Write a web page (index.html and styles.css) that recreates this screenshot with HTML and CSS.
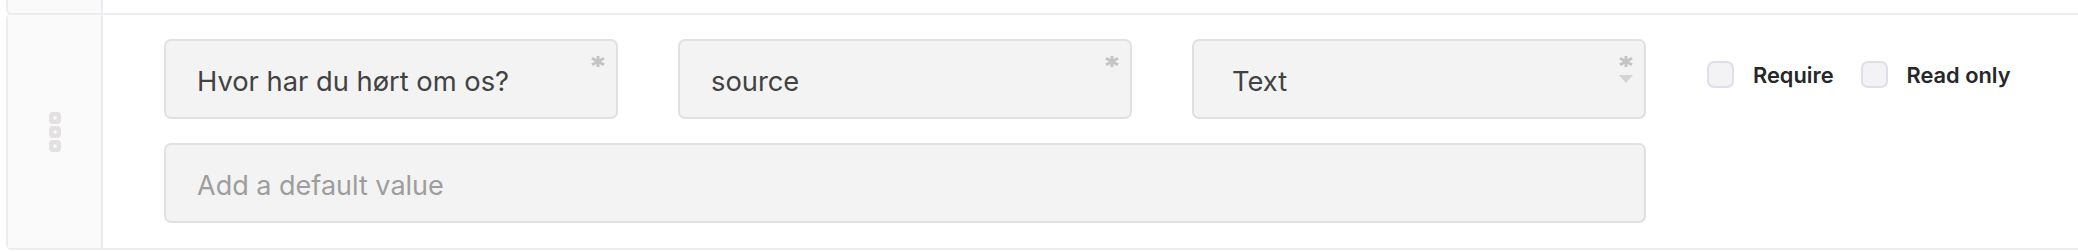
FILE: index.html
```html
<!DOCTYPE html>
<html lang="da">
<head>
<meta charset="utf-8">
<title>Field editor</title>
<link rel="stylesheet" href="styles.css">
</head>
<body>
<div class="list">
  <div class="card card--prev">
    <div class="handle"></div>
    <div class="content"></div>
  </div>
  <div class="card card--current">
    <div class="handle">
      <svg class="grip" width="12" height="40" viewBox="0 0 12 40" aria-hidden="true">
        <rect x="0" y="0" width="12" height="12" rx="4" fill="#e3e1e1"/>
        <circle cx="6" cy="6" r="1.8" fill="#fafafa"/>
        <rect x="0" y="14" width="12" height="12" rx="4" fill="#e3e1e1"/>
        <circle cx="6" cy="20" r="1.8" fill="#fafafa"/>
        <rect x="0" y="28" width="12" height="12" rx="4" fill="#e3e1e1"/>
        <circle cx="6" cy="34" r="1.8" fill="#fafafa"/>
      </svg>
    </div>
    <div class="content">
      <div class="grid">
        <div class="field">
          <span class="value">Hvor har du hørt om os?</span>
          <svg class="req" width="14" height="11" viewBox="0 0 14 11" aria-hidden="true"><g stroke="#c4c4c4" stroke-width="3"><line x1="7" y1="0" x2="7" y2="11"/><line x1="1" y1="2.3" x2="13" y2="8.7"/><line x1="1" y1="8.7" x2="13" y2="2.3"/></g></svg>
        </div>
        <div class="field">
          <span class="value">source</span>
          <svg class="req" width="14" height="11" viewBox="0 0 14 11" aria-hidden="true"><g stroke="#c4c4c4" stroke-width="3"><line x1="7" y1="0" x2="7" y2="11"/><line x1="1" y1="2.3" x2="13" y2="8.7"/><line x1="1" y1="8.7" x2="13" y2="2.3"/></g></svg>
        </div>
        <div class="field field--select">
          <span class="value">Text</span>
          <svg class="req" width="14" height="11" viewBox="0 0 14 11" aria-hidden="true"><g stroke="#c4c4c4" stroke-width="3"><line x1="7" y1="0" x2="7" y2="11"/><line x1="1" y1="2.3" x2="13" y2="8.7"/><line x1="1" y1="8.7" x2="13" y2="2.3"/></g></svg>
          <svg class="caret" width="14" height="8" viewBox="0 0 14 8" aria-hidden="true"><path d="M0 0 H14 L7 8 Z" fill="#d4d4d4"/></svg>
        </div>
        <div class="checks">
          <label class="check"><span class="box"></span><span class="check-label">Require</span></label>
          <label class="check"><span class="box"></span><span class="check-label">Read only</span></label>
        </div>
        <div class="field field--wide">
          <span class="placeholder">Add a default value</span>
        </div>
      </div>
    </div>
  </div>
</div>
</body>
</html>
```

FILE: styles.css
```css
html, body {
  margin: 0;
  padding: 0;
  background: #ffffff;
  overflow: hidden;
}

body {
  font-family: Inter, "Noto Sans", "Liberation Sans", sans-serif;
}

.list {
  padding-left: 6px;
  width: 2200px;
}

.card {
  display: flex;
  border: 2px solid #ececf1;
  border-radius: 6px;
  background: #ffffff;
  box-sizing: border-box;
}

.card--prev {
  height: 15px;
  border-top: none;
  border-radius: 0 0 6px 6px;
}

.card--current {
  margin-top: -2px;
}

.handle {
  width: 93px;
  flex: none;
  background: #fafafb;
  border-right: 2px solid #ececf1;
  display: flex;
  align-items: center;
  justify-content: center;
}

.card--prev .handle {
  border-bottom-left-radius: 4px;
}

.grip {
  display: block;
  margin-left: 1px;
}

.content {
  flex: 1;
  padding: 24px 0 25px 61px;
}

.grid {
  display: grid;
  grid-template-columns: 454px 454px 454px auto;
  column-gap: 60px;
  row-gap: 24px;
}

.field {
  position: relative;
  height: 80px;
  box-sizing: border-box;
  background: #f3f3f3;
  border: 2px solid #e3e0e0;
  border-radius: 7px;
  display: flex;
  align-items: center;
  padding: 4px 0 0 31px;
  font-size: 27.3px;
  color: #424242;
}

.field--select {
  padding-left: 38px;
}

.field--wide {
  grid-column: 1 / 4;
}

.field--wide .placeholder {
  font-size: 27px;
}

.placeholder {
  color: #9d9d9d;
}

.req {
  position: absolute;
  top: 15px;
  right: 11px;
}

.caret {
  position: absolute;
  top: 34px;
  right: 11px;
}

.checks {
  display: flex;
  align-items: center;
  gap: 27px;
  padding: 22px 0 0 1px;
  align-self: start;
}

.check {
  display: flex;
  align-items: center;
  gap: 19px;
}

.box {
  width: 27px;
  height: 27px;
  box-sizing: border-box;
  border: 2px solid #dde0ea;
  border-radius: 7px;
  background: #f3f3f5;
}

.check-label {
  font-size: 21.8px;
  font-weight: 600;
  color: #27272a;
}
```
